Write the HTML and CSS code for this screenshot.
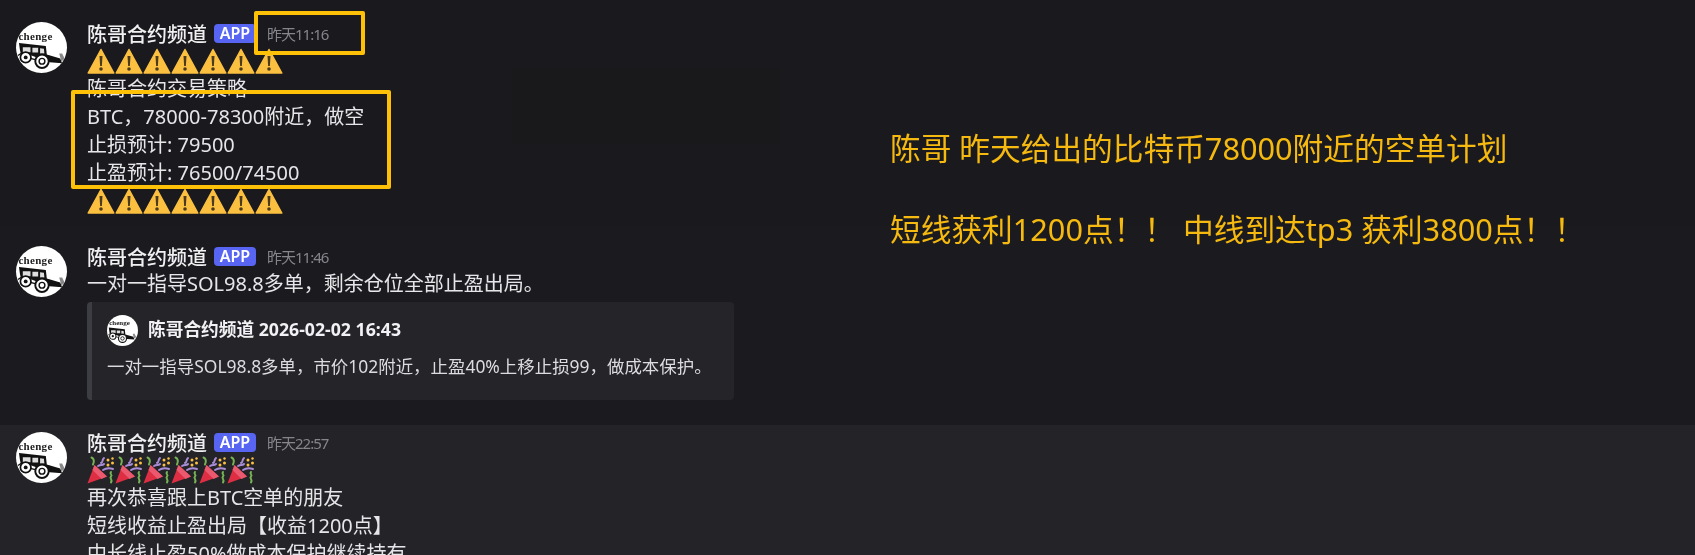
FILE: index.html
```html
<!DOCTYPE html>
<html lang="zh-CN">
<head>
<meta charset="utf-8">
<title>陈哥合约频道</title>
<link rel="stylesheet" href="styles.css">
</head>
<body>
<svg class="defs" width="0" height="0" aria-hidden="true">
  <symbol id="warn" viewBox="0 0 28 28">
    <path d="M14 2.500 26.800 26H1.200Z" fill="#fcc041" stroke="#fcc041" stroke-width="1.500" stroke-linejoin="round"/>
    <path d="M12.500 9h3l-.6 10h-1.800Z" fill="#4a3b20"/>
    <circle cx="14" cy="22" r="1.800" fill="#4a3b20"/>
  </symbol>
  <symbol id="party" viewBox="0 0 28 28">
    <path d="M.5 27.500 7.500 9 20 20.500Z" fill="#dd2e44"/>
    <path d="M7.500 9 20 20.500 14.500 23 5.500 14Z" fill="#ea596e"/>
    <path d="M4.500 1.500c2.500 1 3 4 1.500 7" fill="none" stroke="#77b255" stroke-width="2" stroke-linecap="round"/>
    <path d="M14 7c2.500-1 .5-3 3-5M11 10c3-2 4 0 6-2" fill="none" stroke="#aa8dd8" stroke-width="2" stroke-linecap="round"/>
    <path d="M16 14c3-2 7-2 10-1" fill="none" stroke="#aa8dd8" stroke-width="2" stroke-linecap="round"/>
    <path d="M24 16c-2 2 2 2.500 0 4.500s2 2.500 0 6" fill="none" stroke="#77b255" stroke-width="2" stroke-linecap="round"/>
    <circle cx="21" cy="4" r="1.500" fill="#fcc041"/><circle cx="25.500" cy="7" r="1.500" fill="#fcc041"/>
    <circle cx="21" cy="9" r="1.500" fill="#fcc041"/><circle cx="25.500" cy="2.500" r="1.200" fill="#fcc041"/>
  </symbol>
  <symbol id="car" viewBox="0 0 50 28">
    <path d="M1 1 29 4l1 9 14 4 2 5-13-1L14 14 3 13 2 8Z" fill="#111"/>
    <path d="M5 5.500h8v5H5ZM15 6h6v5h-6ZM23 6.500l4 .5.500 5h-4.500Z" fill="#ddd"/>
    <path d="M0 14c2-2 5-3 9-2l4 5 15 4" fill="none" stroke="#111" stroke-width="1.300"/>
    <circle cx="8" cy="16" r="5.500" fill="#fff" stroke="#111" stroke-width="1.800"/>
    <circle cx="8" cy="16" r="2" fill="#111"/>
    <circle cx="25" cy="20" r="7" fill="#fff" stroke="#111" stroke-width="2"/>
    <circle cx="25" cy="20" r="3" fill="none" stroke="#111" stroke-width="1.500"/>
    <path d="M43 12h3l3 6-4 2Z" fill="#888"/>
  </symbol>
</svg>

<main class="chat">
  <div class="smudge smudge-top"></div>
  <article class="msg msg-first">
    <div class="avatar"><span class="avatar-name">chenge</span><svg class="avatar-car"><use href="#car"/></svg></div>
    <div class="body">
      <header class="head"><span class="name">陈哥合约频道</span><span class="tag">APP</span><time class="stamp">昨天11:16</time></header>
      <div class="emojis"><svg class="emoji"><use href="#warn"/></svg><svg class="emoji"><use href="#warn"/></svg><svg class="emoji"><use href="#warn"/></svg><svg class="emoji"><use href="#warn"/></svg><svg class="emoji"><use href="#warn"/></svg><svg class="emoji"><use href="#warn"/></svg><svg class="emoji"><use href="#warn"/></svg></div>
      <p class="line">陈哥合约交易策略</p>
      <p class="line">BTC，78000-78300附近，做空</p>
      <p class="line">止损预计: 79500</p>
      <p class="line">止盈预计: 76500/74500</p>
      <div class="emojis"><svg class="emoji"><use href="#warn"/></svg><svg class="emoji"><use href="#warn"/></svg><svg class="emoji"><use href="#warn"/></svg><svg class="emoji"><use href="#warn"/></svg><svg class="emoji"><use href="#warn"/></svg><svg class="emoji"><use href="#warn"/></svg><svg class="emoji"><use href="#warn"/></svg></div>
    </div>
  </article>

  <article class="msg msg-second">
    <div class="avatar"><span class="avatar-name">chenge</span><svg class="avatar-car"><use href="#car"/></svg></div>
    <div class="body">
      <header class="head"><span class="name">陈哥合约频道</span><span class="tag">APP</span><time class="stamp">昨天11:46</time></header>
      <p class="line">一对一指导SOL98.8多单，剩余仓位全部止盈出局。</p>
      <section class="embed">
        <div class="embed-head">
          <div class="avatar avatar-small"><span class="avatar-name">chenge</span><svg class="avatar-car"><use href="#car"/></svg></div>
          <strong class="embed-name">陈哥合约频道 2026-02-02 16:43</strong>
        </div>
        <p class="embed-text">一对一指导SOL98.8多单，市价102附近，止盈40%上移止损99，做成本保护。</p>
      </section>
    </div>
  </article>

  <article class="msg msg-third">
    <div class="avatar"><span class="avatar-name">chenge</span><svg class="avatar-car"><use href="#car"/></svg></div>
    <div class="body">
      <header class="head"><span class="name">陈哥合约频道</span><span class="tag">APP</span><time class="stamp">昨天22:57</time></header>
      <div class="emojis"><svg class="emoji"><use href="#party"/></svg><svg class="emoji"><use href="#party"/></svg><svg class="emoji"><use href="#party"/></svg><svg class="emoji"><use href="#party"/></svg><svg class="emoji"><use href="#party"/></svg><svg class="emoji"><use href="#party"/></svg></div>
      <p class="line">再次恭喜跟上BTC空单的朋友</p>
      <p class="line">短线收益止盈出局【收益1200点】</p>
      <p class="line">中长线止盈50%做成本保护继续持有</p>
    </div>
  </article>

  <div class="mark mark-time"></div>
  <div class="mark mark-plan"></div>
  <aside class="note">
    <p class="note-line">陈哥 昨天给出的比特币78000附近的空单计划</p>
    <p class="note-line">短线获利1200点！！ 中线到达tp3 获利3800点！！</p>
  </aside>
</main>
</body>
</html>
```
FILE: styles.css
```css
* { box-sizing: border-box; }
html, body { margin: 0; height: 100%; }
body {
  background: #1a1a1e;
  color: #e6e6e9;
  font-family: "Noto Sans", "Noto Sans CJK SC", sans-serif;
  overflow: hidden;
}
.defs { position: absolute; }
.chat { position: relative; width: 1695px; height: 555px; overflow: hidden; filter: blur(0.4px); }
.smudge { position: absolute; left: 512px; top: 68px; width: 268px; height: 76px; background: #19191b; }
.msg { position: relative; display: flex; gap: 20px; padding-left: 16px; }
.msg-first { padding-top: 19px; height: 226px; }
.msg-second { padding-top: 16px; height: 199px; background: #1b1b1f; }
.msg-second .avatar { margin-top: 4px; }
.msg-third { padding-top: 3px; height: 130px; background: #242428; }
.msg-third .avatar { margin-top: 4px; }
.avatar {
  flex: none;
  width: 51px;
  height: 51px;
  margin-top: 3px;
  border-radius: 50%;
  background: #fff;
  display: flex;
  flex-direction: column;
  align-items: center;
  overflow: hidden;
  padding-top: 9px;
}
.avatar-name { font: 700 11px/11px "Liberation Serif", serif; color: #222; margin-left: -12px; letter-spacing: 0.3px; }
.avatar-car { width: 48px; height: 27px; flex: none; }
.msg .avatar-small { width: 31px; height: 31px; margin-top: 0; padding-top: 5px; }
.avatar-small .avatar-name { font-size: 7px; line-height: 7px; margin-left: -6px; letter-spacing: 0; }
.avatar-small .avatar-car { width: 29px; height: 16px; }
.body { flex: none; width: 800px; }
.head { display: flex; align-items: center; height: 28px; }
.name { font-size: 20px; font-weight: 500; color: #f0f0f2; }
.tag {
  margin-left: 7px;
  width: 42px;
  height: 19px;
  border-radius: 4px;
  background: #5865f2;
  color: #fff;
  font-size: 16px;
  font-weight: 600;
  line-height: 19px;
  text-align: center;
}
.stamp { margin-left: 11px; font-size: 15px; letter-spacing: -1px; color: #85858c; }
.line { margin: 0; font-size: 20px; line-height: 28px; height: 28px; white-space: nowrap; }
.emojis { display: flex; height: 28px; }
.emoji { width: 28px; height: 28px; flex: none; }
.embed {
  margin-top: 4px;
  width: 647px;
  height: 98px;
  background: #242429;
  border-left: 5px solid #3c3c43;
  border-radius: 4px;
  padding: 13px 0 0 15px;
}
.embed-head { display: flex; align-items: center; gap: 10px; }
.embed-name { font-size: 17.700px; font-weight: 700; color: #f2f2f4; white-space: nowrap; margin-bottom: 5px; }
.embed-text { margin: 7px 0 0; font-size: 17.450px; line-height: 26px; color: #dcdce0; white-space: nowrap; }
.mark { position: absolute; border: 4px solid #ffc107; border-radius: 2px; }
.mark-time { left: 254px; top: 11px; width: 111px; height: 44px; }
.mark-plan { left: 71px; top: 90px; width: 320px; height: 99px; }
.note { position: absolute; left: 890px; top: 128px; color: #f5b90f; font-size: 30.700px; }
.note-line { margin: 0 0 41px; line-height: 40px; white-space: nowrap; }
```
